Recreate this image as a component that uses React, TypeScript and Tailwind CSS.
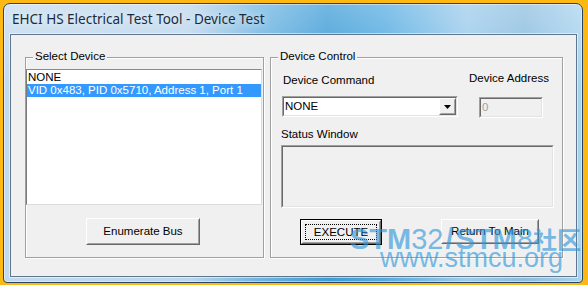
import React from "react";

const ui = "font-['Liberation_Sans',Arial,sans-serif] text-[11.5px] leading-[13px] text-black";

function Sunken({ className, children }: { className: string; children?: React.ReactNode }) {
    return (
        <div className={`border border-t-[#a0a0a0] border-l-[#a0a0a0] border-b-white border-r-white ${className}`}>
            <div className="h-full w-full border border-t-[#696969] border-l-[#696969] border-b-[#e3e3e3] border-r-[#e3e3e3]">
                {children}
            </div>
        </div>
    );
}

function Raised({ className, children }: { className: string; children?: React.ReactNode }) {
    return (
        <div className={`border border-t-white border-l-white border-b-[#696969] border-r-[#696969] bg-[#f0f0f0] ${className}`}>
            <div className="h-full w-full border border-t-[#f0f0f0] border-l-[#f0f0f0] border-b-[#a0a0a0] border-r-[#a0a0a0] flex items-center justify-center">
                {children}
            </div>
        </div>
    );
}

function GroupBox({ label, className, children }: { label: string; className: string; children?: React.ReactNode }) {
    return (
        <div className={`relative border border-[#a0a0a0] shadow-[inset_1px_1px_0_#fff,1px_1px_0_#fff] ${className}`}>
            <span className="absolute left-[7px] top-[-8px] px-[2px] bg-[#f0f0f0]">{label}</span>
            {children}
        </div>
    );
}

export default function App() {
    return (
        <div className={`relative w-[588px] h-[285px] bg-[#fdb913] pt-[3px] pl-[3px] overflow-hidden ${ui}`}>
            <div className="w-[580px] h-[280px] rounded-t-[7px] rounded-b-[4px] border border-[#2b4560] shadow-[inset_0_0_0_1px_rgba(255,255,255,0.45)] bg-[image:linear-gradient(180deg,rgba(255,255,255,0.28),rgba(255,255,255,0)_30%),linear-gradient(90deg,#c3daee_0%,#bcd6ec_32%,#70b5e1_44%,#3d9cd7_56%,#55ace1_66%,#9ccbeb_80%,#8cbddf_90%,#a8d3ef_100%)] flex flex-col">
                <div className="h-[30px] pl-[8px] flex items-center">
                    <span className="font-['Noto_Sans',sans-serif] text-[13.5px] text-[#1b2b3c] [text-shadow:0_0_9px_rgba(255,255,255,0.95)]">
                        EHCI HS Electrical Test Tool - Device Test
                    </span>
                </div>
                <div className="ml-[6px] w-[567px] h-[243px] border border-[#5e778f] shadow-[0_0_0_1px_rgba(255,255,255,0.55)] bg-[#f0f0f0] flex items-start pl-[14px] pt-[22px]">
                    <GroupBox label="Select Device" className="w-[239px] h-[201px]">
                        <div className="mt-[11px] w-[236px] h-[136px] bg-white border border-t-[#8a8a8a] border-l-[#7a7a7a] border-b-[#dcdcdc] border-r-[#dcdcdc] pt-[1px]">
                            <div className="h-[13px] pl-[1px]">NONE</div>
                            <div className="h-[13px] pl-[1px] bg-[#3399ff] text-white">VID 0x483, PID 0x5710, Address 1, Port 1</div>
                        </div>
                        <Raised className="ml-[60px] mt-[13px] w-[114px] h-[27px]">Enumerate Bus</Raised>
                    </GroupBox>
                    <GroupBox label="Device Control" className="ml-[6px] w-[293px] h-[201px] pl-[10px]">
                        <div className="flex items-start">
                            <div className="ml-[1px] mt-[16px] flex flex-col">
                                <span className="pl-[1px]">Device Command</span>
                                <Sunken className="mt-[9px] w-[176px] h-[21px] bg-white">
                                    <div className="h-full flex items-center">
                                        <span className="flex-1 pl-[1px]">NONE</span>
                                        <Raised className="w-[17px] h-full">
                                            <svg width="7" height="4" viewBox="0 0 7 4">
                                                <path d="M0 0h7L3.5 4z" fill="#000" />
                                            </svg>
                                        </Raised>
                                    </div>
                                </Sunken>
                            </div>
                            <div className="ml-[11px] mt-[14px] flex flex-col">
                                <span>Device Address</span>
                                <Sunken className="ml-[10px] mt-[12px] w-[64px] h-[21px] bg-[#f0f0f0]">
                                    <div className="h-full flex items-center pl-[1px] text-[#a0a0a0]">0</div>
                                </Sunken>
                            </div>
                        </div>
                        <div className="mt-[10px]">Status Window</div>
                        <Sunken className="mt-[4px] w-[273px] h-[63px] bg-[#f0f0f0]" />
                        <div className="mt-[11px] flex items-start">
                            <div className="ml-[19px] w-[82px] h-[26px] border border-black">
                                <Raised className="w-full h-full">
                                    <div className="w-[72px] h-[16px] border border-dotted border-black flex items-center justify-center">EXECUTE</div>
                                </Raised>
                            </div>
                            <Raised className="ml-[59px] w-[98px] h-[25px]">Return To Main</Raised>
                        </div>
                    </GroupBox>
                </div>
            </div>
            <div className="pointer-events-none absolute left-[350px] top-[224px] flex flex-col text-[#2f97dc]/65 font-['Liberation_Sans',Arial,sans-serif]">
                <div className="text-[29px] leading-[29px] whitespace-nowrap flex items-baseline">
                    <span className="font-bold">STM</span>
                    <span>32</span>
                    <span className="font-bold px-[2px]">/</span>
                    <span className="font-bold">STM</span>
                    <span>8</span>
                    <span className="font-bold text-[24px] font-['Noto_Sans_CJK_SC',sans-serif]">社区</span>
                </div>
                <div className="ml-[30px] -mt-[9px] text-[27px] leading-[27px]">www.stmcu.org</div>
            </div>
        </div>
    );
}
